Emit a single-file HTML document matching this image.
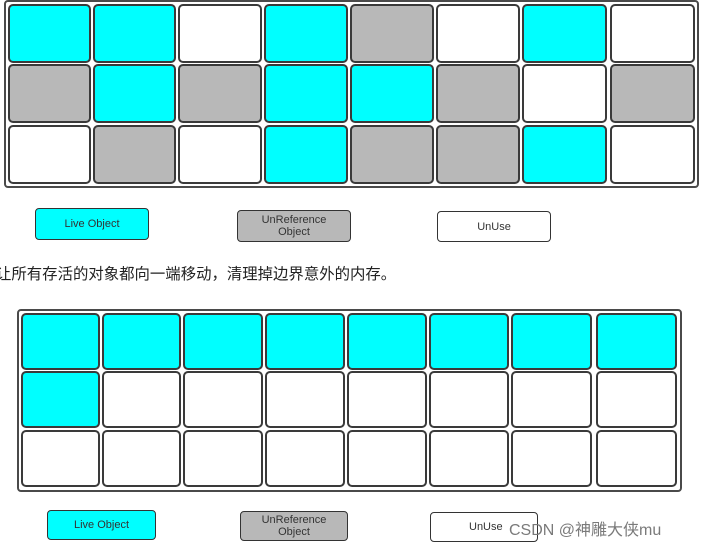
<!DOCTYPE html><html><head><meta charset="utf-8"><style>
body{margin:0;width:703px;height:546px;background:#fff;position:relative;overflow:hidden;font-family:"Liberation Sans","Noto Sans CJK SC",sans-serif}
div{position:absolute;box-sizing:border-box}
.f{border:2px solid #4a4a4a;border-radius:4px}
.c{border:2px solid #3a3a3a;border-radius:5px}
.C{background:#00ffff}.G{background:#b8b8b8}.W{background:#fff}
.l{border:1.5px solid #333;border-radius:4px;font-size:11px;color:#333;text-align:center;display:flex;align-items:center;justify-content:center;line-height:12px}
</style></head><body>
<div class="f" style="left:4px;top:0;width:695px;height:188px"></div>
<div class="c C" style="left:8px;top:4px;width:83px;height:59px"></div>
<div class="c C" style="left:93px;top:4px;width:83px;height:59px"></div>
<div class="c W" style="left:178px;top:4px;width:84px;height:59px"></div>
<div class="c C" style="left:264px;top:4px;width:84px;height:59px"></div>
<div class="c G" style="left:350px;top:4px;width:84px;height:59px"></div>
<div class="c W" style="left:436px;top:4px;width:84px;height:59px"></div>
<div class="c C" style="left:522px;top:4px;width:85px;height:59px"></div>
<div class="c W" style="left:610px;top:4px;width:85px;height:59px"></div>
<div class="c G" style="left:8px;top:64px;width:83px;height:59px"></div>
<div class="c C" style="left:93px;top:64px;width:83px;height:59px"></div>
<div class="c G" style="left:178px;top:64px;width:84px;height:59px"></div>
<div class="c C" style="left:264px;top:64px;width:84px;height:59px"></div>
<div class="c C" style="left:350px;top:64px;width:84px;height:59px"></div>
<div class="c G" style="left:436px;top:64px;width:84px;height:59px"></div>
<div class="c W" style="left:522px;top:64px;width:85px;height:59px"></div>
<div class="c G" style="left:610px;top:64px;width:85px;height:59px"></div>
<div class="c W" style="left:8px;top:125px;width:83px;height:59px"></div>
<div class="c G" style="left:93px;top:125px;width:83px;height:59px"></div>
<div class="c W" style="left:178px;top:125px;width:84px;height:59px"></div>
<div class="c C" style="left:264px;top:125px;width:84px;height:59px"></div>
<div class="c G" style="left:350px;top:125px;width:84px;height:59px"></div>
<div class="c G" style="left:436px;top:125px;width:84px;height:59px"></div>
<div class="c C" style="left:522px;top:125px;width:85px;height:59px"></div>
<div class="c W" style="left:610px;top:125px;width:85px;height:59px"></div>

<div class="l C" style="left:35px;top:208px;width:114px;height:32px">Live Object</div>
<div class="l G" style="left:237px;top:210px;width:114px;height:32px">UnReference<br>Object</div>
<div class="l W" style="left:437px;top:211px;width:114px;height:31px">UnUse</div>

<div style="left:-4px;top:262px;font-size:15.4px;color:#222;white-space:nowrap">让所有存活的对象都向一端移动，清理掉边界意外的内存。</div>

<div class="f" style="left:17px;top:309px;width:665px;height:183px"></div>
<div class="c C" style="left:21px;top:313px;width:79px;height:57px"></div>
<div class="c C" style="left:102px;top:313px;width:79px;height:57px"></div>
<div class="c C" style="left:183px;top:313px;width:80px;height:57px"></div>
<div class="c C" style="left:265px;top:313px;width:80px;height:57px"></div>
<div class="c C" style="left:347px;top:313px;width:80px;height:57px"></div>
<div class="c C" style="left:429px;top:313px;width:80px;height:57px"></div>
<div class="c C" style="left:511px;top:313px;width:81px;height:57px"></div>
<div class="c C" style="left:596px;top:313px;width:81px;height:57px"></div>
<div class="c C" style="left:21px;top:371px;width:79px;height:57px"></div>
<div class="c W" style="left:102px;top:371px;width:79px;height:57px"></div>
<div class="c W" style="left:183px;top:371px;width:80px;height:57px"></div>
<div class="c W" style="left:265px;top:371px;width:80px;height:57px"></div>
<div class="c W" style="left:347px;top:371px;width:80px;height:57px"></div>
<div class="c W" style="left:429px;top:371px;width:80px;height:57px"></div>
<div class="c W" style="left:511px;top:371px;width:81px;height:57px"></div>
<div class="c W" style="left:596px;top:371px;width:81px;height:57px"></div>
<div class="c W" style="left:21px;top:430px;width:79px;height:57px"></div>
<div class="c W" style="left:102px;top:430px;width:79px;height:57px"></div>
<div class="c W" style="left:183px;top:430px;width:80px;height:57px"></div>
<div class="c W" style="left:265px;top:430px;width:80px;height:57px"></div>
<div class="c W" style="left:347px;top:430px;width:80px;height:57px"></div>
<div class="c W" style="left:429px;top:430px;width:80px;height:57px"></div>
<div class="c W" style="left:511px;top:430px;width:81px;height:57px"></div>
<div class="c W" style="left:596px;top:430px;width:81px;height:57px"></div>

<div class="l C" style="left:47px;top:510px;width:109px;height:30px">Live Object</div>
<div class="l G" style="left:240px;top:511px;width:108px;height:30px">UnReference<br>Object</div>
<div class="l W" style="left:430px;top:512px;width:108px;height:30px;justify-content:flex-start;padding-left:38px">UnUse</div>
<div style="left:509px;top:516px;font-size:16px;color:#7a7a7a;white-space:nowrap">CSDN @神雕大侠mu</div>
</body></html>
